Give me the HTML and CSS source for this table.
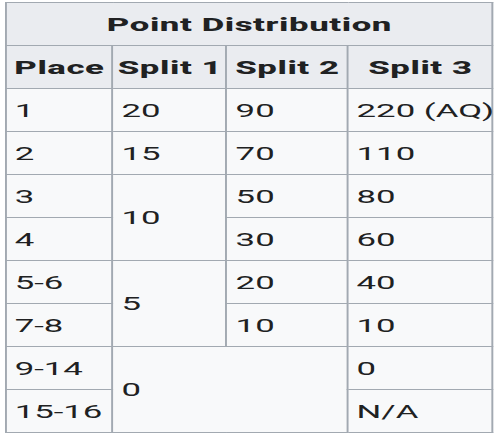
FILE: index.html
```html
<!DOCTYPE html>
<html>
<head>
<meta charset="utf-8">
<link rel="stylesheet" href="styles.css">
</head>
<body>
<div class="wrap">
<table class="points">
  <colgroup>
    <col class="c-place"><col class="c-s1"><col class="c-s2"><col class="c-s3">
  </colgroup>
  <tr class="r-title"><th colspan="4">Point Distribution</th></tr>
  <tr class="r-head"><th>Place</th><th>Split 1</th><th>Split 2</th><th>Split 3</th></tr>
  <tr><td>1</td><td>20</td><td>90</td><td>220 (AQ)</td></tr>
  <tr><td>2</td><td>15</td><td>70</td><td>110</td></tr>
  <tr><td>3</td><td rowspan="2">10</td><td>50</td><td>80</td></tr>
  <tr><td>4</td><td>30</td><td>60</td></tr>
  <tr><td>5-6</td><td rowspan="2">5</td><td>20</td><td>40</td></tr>
  <tr><td>7-8</td><td>10</td><td>10</td></tr>
  <tr><td>9-14</td><td rowspan="2" colspan="2">0</td><td>0</td></tr>
  <tr><td>15-16</td><td>N/A</td></tr>
</table>
</div>
</body>
</html>
```
FILE: styles.css
```css
html, body {
  margin: 0;
  background: #ffffff;
}
.wrap {
  padding: 2px 0 0 5px;
}
.points {
  border-collapse: collapse;
  table-layout: fixed;
  width: 252.3px;
  font-family: Roboto, "Liberation Sans", sans-serif;
  font-size: 18px;
  color: #202122;
  background: #f8f9fa;
  border: 1px solid #a2a9b1;
  transform: scaleX(1.93);
  transform-origin: 0 0;
}
.c-place { width: 55.4px; }
.c-s1 { width: 59.1px; }
.c-s2 { width: 62.7px; }
.c-s3 { width: 75.1px; }
.points th, .points td {
  border: 1px solid #a2a9b1;
  padding: 0 2px 0 4px;
  white-space: nowrap;
}
.points th {
  background: #eaecf0;
  font-weight: 800;
  letter-spacing: 0.3px;
  text-align: center;
  padding-top: 1px;
  padding-left: 2px;
}
.points td {
  text-align: left;
}
.r-title { height: 43px; }
.r-head { height: 44px; }
.points tr { height: 43px; }
```
